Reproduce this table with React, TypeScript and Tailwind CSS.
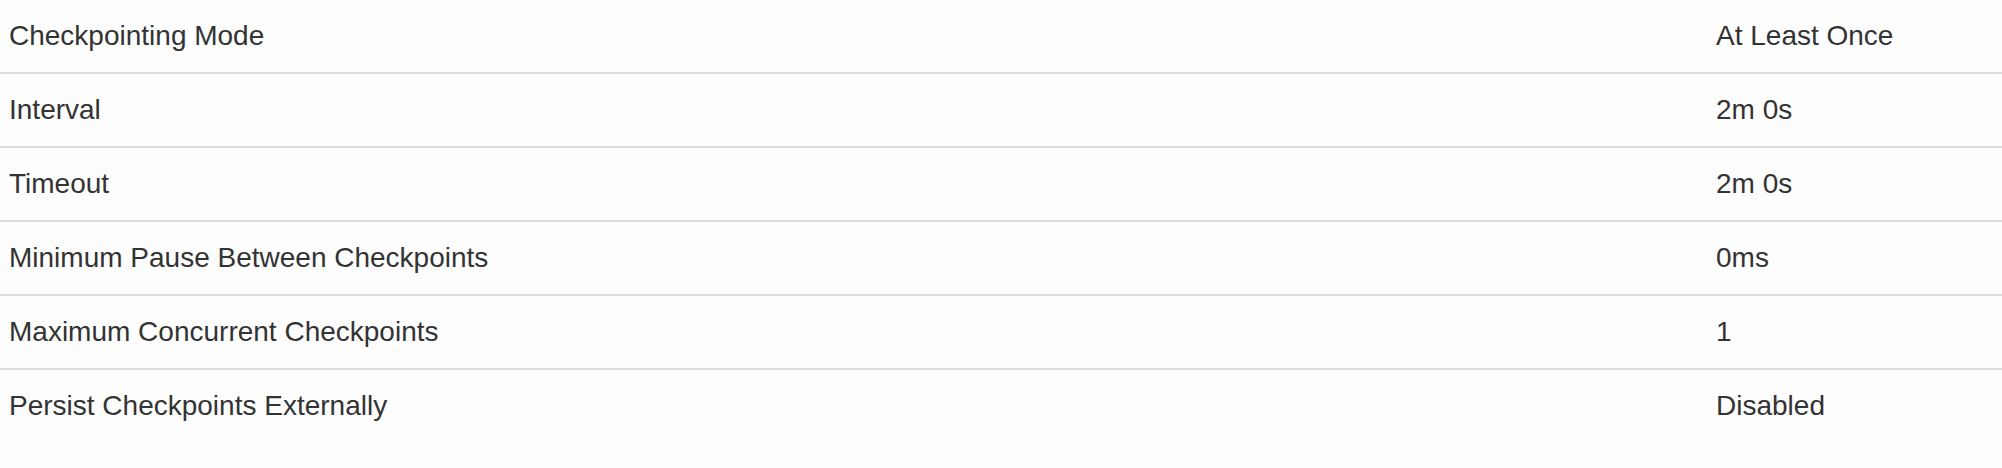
const rows: [string, string][] = [
  ['Checkpointing Mode', 'At Least Once'],
  ['Interval', '2m 0s'],
  ['Timeout', '2m 0s'],
  ['Minimum Pause Between Checkpoints', '0ms'],
  ['Maximum Concurrent Checkpoints', '1'],
  ['Persist Checkpoints Externally', 'Disabled'],
];

export default function App() {
  return (
    <div className="h-[468px] w-full bg-[#fdfdfd] text-[#333333] text-[28px] leading-[40px] font-['Liberation_Sans',Arial,sans-serif]">
      {rows.map(([label, value], index) => (
        <div
          key={label}
          className={
            'grid grid-cols-[1707px_1fr] ' +
            (index < rows.length - 1 ? 'border-b-2 border-[#dddddd]' : '')
          }
        >
          <div className="py-4 pl-[9px]">{label}</div>
          <div className="py-4 pl-[9px]">{value}</div>
        </div>
      ))}
    </div>
  );
}
